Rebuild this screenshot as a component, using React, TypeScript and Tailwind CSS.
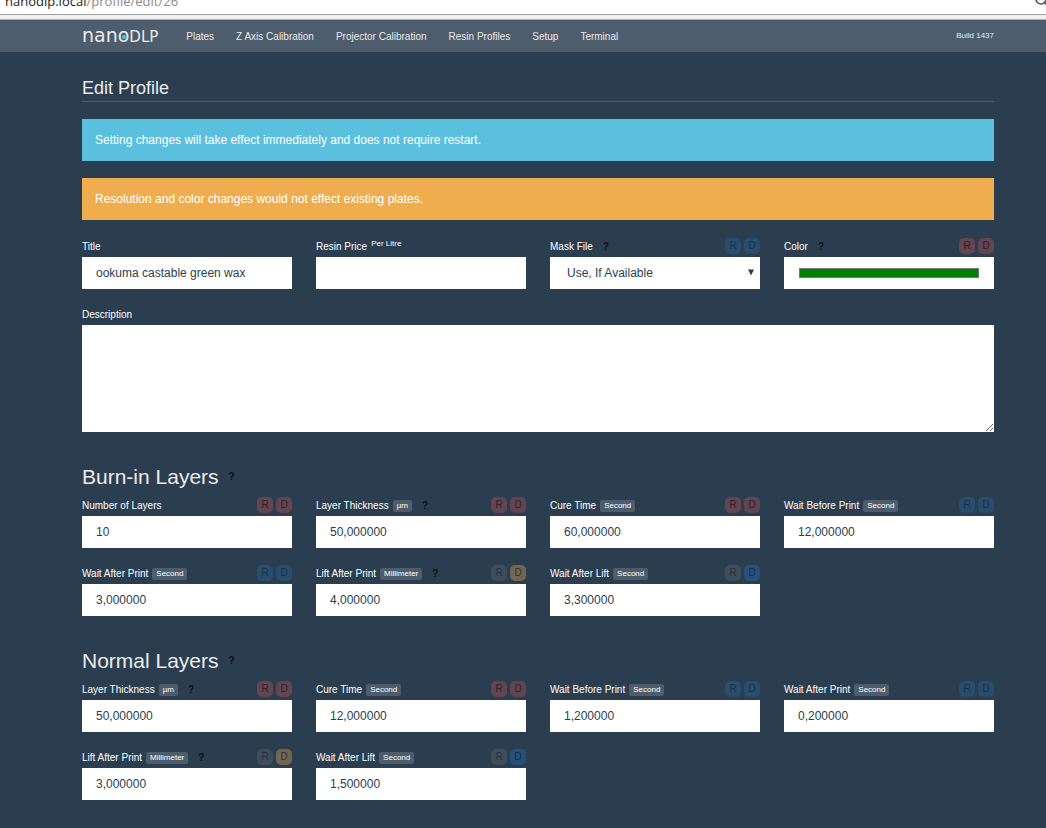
import React, { useState } from 'react';
import { clsx } from 'clsx';

type Tone = 'red' | 'blue' | 'brightBlue' | 'gray' | 'yellow';

interface FieldInfo {
  id: string;
  label: string;
  unit?: string;
  help?: boolean;
  tones?: [Tone, Tone];
  value: string;
}

const toneClasses: Record<Tone, string> = {
  red: 'bg-[#614551] text-[#30202b]',
  blue: 'bg-[#294d6d] text-[#1a3045]',
  brightBlue: 'bg-[#27517a] text-[#162c42]',
  gray: 'bg-[#3d4d5b] text-[#25323e]',
  yellow: 'bg-[#716650] text-[#332f2c]',
};

const inputClass = 'block w-full h-8 bg-white px-[14px] text-xs text-[#2b3e50] outline-none';

const burnInFields: FieldInfo[] = [
  { id: 'burn-layers', label: 'Number of Layers', tones: ['red', 'red'], value: '10' },
  { id: 'burn-thickness', label: 'Layer Thickness', unit: 'µm', help: true, tones: ['red', 'red'], value: '50,000000' },
  { id: 'burn-cure', label: 'Cure Time', unit: 'Second', tones: ['red', 'red'], value: '60,000000' },
  { id: 'burn-wait-before', label: 'Wait Before Print', unit: 'Second', tones: ['blue', 'blue'], value: '12,000000' },
  { id: 'burn-wait-after', label: 'Wait After Print', unit: 'Second', tones: ['blue', 'blue'], value: '3,000000' },
  { id: 'burn-lift', label: 'Lift After Print', unit: 'Millimeter', help: true, tones: ['gray', 'yellow'], value: '4,000000' },
  { id: 'burn-wait-lift', label: 'Wait After Lift', unit: 'Second', tones: ['gray', 'brightBlue'], value: '3,300000' },
];

const normalFields: FieldInfo[] = [
  { id: 'thickness', label: 'Layer Thickness', unit: 'µm', help: true, tones: ['red', 'red'], value: '50,000000' },
  { id: 'cure', label: 'Cure Time', unit: 'Second', tones: ['red', 'red'], value: '12,000000' },
  { id: 'wait-before', label: 'Wait Before Print', unit: 'Second', tones: ['blue', 'blue'], value: '1,200000' },
  { id: 'wait-after', label: 'Wait After Print', unit: 'Second', tones: ['blue', 'blue'], value: '0,200000' },
  { id: 'lift', label: 'Lift After Print', unit: 'Millimeter', help: true, tones: ['gray', 'yellow'], value: '3,000000' },
  { id: 'wait-lift', label: 'Wait After Lift', unit: 'Second', tones: ['gray', 'brightBlue'], value: '1,500000' },
];

const navItems = ['Plates', 'Z Axis Calibration', 'Projector Calibration', 'Resin Profiles', 'Setup', 'Terminal'];

function Logo() {
  return (
    <a href="#" className="flex items-baseline font-['DejaVu_Sans',sans-serif] leading-5 text-[#ebebeb]">
      <span className="text-[19px]">nan</span>
      <span className="relative text-[19px]">
        o
        <span className="absolute left-1 top-[10px] size-1 rounded-full bg-[#4fc0f5]" />
      </span>
      <span className="text-[15px]">DLP</span>
    </a>
  );
}

function Help() {
  return <span className="ml-[10px] text-[10px] font-bold text-[#0b0f14]">?</span>;
}

function Field({ field, sup, children }: { field: Omit<FieldInfo, 'value'>; sup?: string; children: React.ReactNode }) {
  return (
    <div className="mb-[17px]">
      <div className="flex items-center h-4 mb-[3px]">
        <label htmlFor={field.id} className="text-[10px] text-white">
          {field.label}
          {sup && <sup className="ml-1 text-[8px]">{sup}</sup>}
        </label>
        {field.unit && (
          <span className="ml-1 mt-px px-1 rounded-xs bg-[#4e5d6c] text-[8px] leading-3 text-white">{field.unit}</span>
        )}
        {field.help && <Help />}
        {field.tones && (
          <div className="ml-auto flex gap-[3px]">
            <button type="button" className={clsx('size-4 rounded-[5px] text-[10px] leading-4', toneClasses[field.tones[0]])}>R</button>
            <button type="button" className={clsx('size-4 rounded-[5px] text-[10px] leading-4', toneClasses[field.tones[1]])}>D</button>
          </div>
        )}
      </div>
      {children}
    </div>
  );
}

function Section({ title, fields }: { title: string; fields: FieldInfo[] }) {
  return (
    <section className="pt-4">
      <h2 className="flex items-center mb-2 text-[21px] leading-6 text-[#ebebeb]">
        {title}
        <Help />
      </h2>
      <div className="grid grid-cols-4 gap-x-6">
        {fields.map((field) => (
          <Field key={field.id} field={field}>
            <input id={field.id} type="text" defaultValue={field.value} className={inputClass} />
          </Field>
        ))}
      </div>
    </section>
  );
}

export default function App() {
  const [color, setColor] = useState('#008000');

  return (
    <div className="min-h-screen bg-[#2b3e50] font-['Liberation_Sans',sans-serif]">
      {/* Address bar */}
      <div className="h-5 overflow-hidden border-b border-[#b0b0b0] bg-[#f0f0f0]">
        <div className="relative h-[15px] overflow-hidden border-b border-[#a0a0a0] bg-white">
          <p className="-mt-[9px] pl-[5px] font-['Open_Sans',sans-serif] text-[13px] leading-5 text-[#8a8a8a]">
            <span className="text-[#222]">nanodlp.local</span>/profile/edit/26
          </p>
          <svg className="absolute right-0 top-0" width="11" height="8" viewBox="0 0 11 8" fill="none" stroke="#555" strokeWidth="1.6">
            <circle cx="6" cy="-1" r="5" />
            <path d="M9 2l4 4" />
          </svg>
        </div>
      </div>

      <nav className="flex items-center h-8 pl-[82px] pr-[52px] bg-[#4e5d6c] text-[10px] text-[#ebebeb]">
        <Logo />
        <ul className="flex gap-[22px] ml-7">
          {navItems.map((item) => (
            <li key={item}><a href="#">{item}</a></li>
          ))}
        </ul>
        <span className="ml-auto text-[8px]">Build 1437</span>
      </nav>

      <main className="pl-[82px] pr-[52px] pt-6">
        <h1 className="pb-px mb-[17px] border-b border-[#4e5d6c] text-lg leading-6 text-[#ebebeb]">Edit Profile</h1>

        <div className="mb-[17px] px-[13px] py-[11px] bg-[#5bc0de] text-xs leading-5 text-white">
          Setting changes will take effect immediately and does not require restart.
        </div>
        <div className="mb-[18px] px-[13px] py-[11px] bg-[#f0ad4e] text-xs leading-5 text-white">
          Resolution and color changes would not effect existing plates.
        </div>

        <form>
          <div className="grid grid-cols-4 gap-x-6">
            <Field field={{ id: 'title', label: 'Title' }}>
              <input id="title" type="text" defaultValue="ookuma castable green wax" className={inputClass} />
            </Field>
            <Field field={{ id: 'price', label: 'Resin Price' }} sup="Per Litre">
              <input id="price" type="text" className={inputClass} />
            </Field>
            <Field field={{ id: 'mask', label: 'Mask File', help: true, tones: ['blue', 'blue'] }}>
              <div className="relative">
                <select id="mask" className="block w-full h-8 appearance-none bg-white px-[17px] text-xs text-[#2b3e50] outline-none">
                  <option>Use, If Available</option>
                </select>
                <svg className="absolute right-[5px] top-3 pointer-events-none" width="8" height="7" viewBox="0 0 8 7" fill="#2b3e50">
                  <path d="M1 0.5h6L4 6.5z" />
                </svg>
              </div>
            </Field>
            <Field field={{ id: 'color', label: 'Color', help: true, tones: ['red', 'red'] }}>
              <input
                id="color"
                type="color"
                value={color}
                onChange={(e) => setColor(e.target.value)}
                className="block w-full h-8 appearance-none bg-white px-[15px] py-[11px] [&::-webkit-color-swatch-wrapper]:p-0 [&::-webkit-color-swatch]:rounded-none [&::-webkit-color-swatch]:border [&::-webkit-color-swatch]:border-[#777]"
              />
            </Field>
          </div>
          <Field field={{ id: 'description', label: 'Description' }}>
            <textarea id="description" className="block w-full h-[107px] bg-white px-[14px] py-2 text-xs text-[#2b3e50] outline-none" />
          </Field>

          <Section title="Burn-in Layers" fields={burnInFields} />
          <Section title="Normal Layers" fields={normalFields} />
        </form>
      </main>
    </div>
  );
}
